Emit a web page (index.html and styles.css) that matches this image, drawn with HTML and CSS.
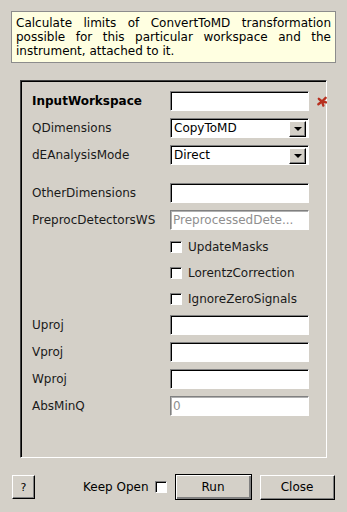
FILE: index.html
```html
<!DOCTYPE html>
<html lang="en">
<head>
  <meta charset="UTF-8">
  <title>CalculateLimitsOfConvertToMD</title>
  <meta name="viewport" content="width=device-width, initial-scale=1.0">
  <link rel="stylesheet" href="styles.css">
</head>
<body>
  <div class="dialog">
    <div class="desc">Calculate limits of ConvertToMD transformation possible for this particular workspace and the instrument, attached to it.</div>

    <div class="group">
      <div class="form">
        <label class="lbl bold">InputWorkspace</label>
        <div class="field"><input type="text" class="edit"></div>
        <span class="star">
          <svg width="11" height="11" viewBox="0 0 11 11"><g stroke="#b8301f" stroke-width="2.6" stroke-linecap="round"><line x1="5.5" y1="5.5" x2="9.5" y2="1.5"/><line x1="5.5" y1="5.5" x2="10" y2="6.5"/><line x1="5.5" y1="5.5" x2="7" y2="10"/><line x1="5.5" y1="5.5" x2="1.5" y2="8.5"/><line x1="5.5" y1="5.5" x2="2" y2="2.5"/></g></svg>
        </span>

        <label class="lbl">QDimensions</label>
        <div class="field combo"><span>CopyToMD</span><span class="arrow"></span></div>
        <span></span>

        <label class="lbl">dEAnalysisMode</label>
        <div class="field combo"><span>Direct</span><span class="arrow"></span></div>
        <span></span>

        <label class="lbl gap">OtherDimensions</label>
        <div class="field gap"><input type="text" class="edit"></div>
        <span class="gap"></span>

        <label class="lbl">PreprocDetectorsWS</label>
        <div class="field"><input type="text" class="edit disabled" value="PreprocessedDete..." disabled></div>
        <span></span>

        <span></span>
        <div class="check"><span class="box"></span>UpdateMasks</div>
        <span></span>

        <span></span>
        <div class="check"><span class="box"></span>LorentzCorrection</div>
        <span></span>

        <span></span>
        <div class="check"><span class="box"></span>IgnoreZeroSignals</div>
        <span></span>

        <label class="lbl">Uproj</label>
        <div class="field"><input type="text" class="edit"></div>
        <span></span>

        <label class="lbl">Vproj</label>
        <div class="field"><input type="text" class="edit"></div>
        <span></span>

        <label class="lbl">Wproj</label>
        <div class="field"><input type="text" class="edit"></div>
        <span></span>

        <label class="lbl">AbsMinQ</label>
        <div class="field"><input type="text" class="edit disabled" value="0" disabled></div>
        <span></span>
      </div>
    </div>

    <div class="buttons">
      <button class="btn help">?</button>
      <div class="keep">Keep Open <span class="box"></span></div>
      <button class="btn run">Run</button>
      <button class="btn close">Close</button>
    </div>
  </div>
</body>
</html>
```

FILE: styles.css
```css
* {
  box-sizing: border-box;
}

body {
  margin: 0;
  padding: 0;
  background: #d4d0c8;
  font-family: "DejaVu Sans", Verdana, sans-serif;
  font-size: 12px;
  color: #000;
}

.dialog {
  width: 347px;
  height: 512px;
  padding-top: 11px;
}

.desc {
  margin-left: 11px;
  width: 325px;
  height: 52px;
  padding: 4px 4px;
  background: #ffffe1;
  border: 1px solid #8c8c8c;
  line-height: 14px;
  text-align: justify;
}

.group {
  margin: 17px 0 0 20px;
  width: 307px;
  height: 378px;
  border-top: 1px solid #404040;
  border-left: 1px solid #404040;
  border-right: 1px solid #fff;
  border-bottom: 1px solid #fff;
  box-shadow: inset 1px 1px #000;
  padding: 10px 0 0 11px;
}

.form {
  display: grid;
  grid-template-columns: 138px 139px 18px;
  row-gap: 7px;
  align-items: center;
}

.gap {
  margin-top: 11px;
}

.lbl {
  white-space: nowrap;
  line-height: 20px;
  color: #1a1a1a;
}

.bold {
  font-weight: bold;
  color: #000;
}

.field {
  height: 20px;
}

.edit {
  width: 139px;
  height: 20px;
  margin: 0;
  padding: 0 2px;
  font-family: inherit;
  font-size: 12px;
  background: #fff;
  border-top: 1px solid #808080;
  border-left: 1px solid #808080;
  border-right: 1px solid #fff;
  border-bottom: 1px solid #fff;
  box-shadow: inset 1px 1px #000;
  outline: none;
}

.edit.disabled {
  color: #8f8f8f;
  box-shadow: inset 1px 1px #b0b0b0;
}

.combo {
  display: flex;
  align-items: center;
  justify-content: space-between;
  padding: 0 2px 0 3px;
  background: #fff;
  border-top: 1px solid #808080;
  border-left: 1px solid #808080;
  border-right: 1px solid #fff;
  border-bottom: 1px solid #fff;
  box-shadow: inset 1px 1px #000;
}

.arrow {
  position: relative;
  width: 17px;
  height: 16px;
  margin-top: 1px;
  background: #d4d0c8;
  border-top: 1px solid #fff;
  border-left: 1px solid #fff;
  border-right: 1px solid #000;
  border-bottom: 1px solid #000;
  box-shadow: inset -1px -1px #808080;
}

.arrow::after {
  content: "";
  position: absolute;
  left: 4px;
  top: 5px;
  border-left: 4px solid transparent;
  border-right: 4px solid transparent;
  border-top: 4px solid #000;
}

.star {
  display: flex;
  align-items: center;
  padding-left: 8px;
}

.check {
  display: flex;
  align-items: center;
  gap: 6px;
  height: 19px;
  color: #1a1a1a;
}

.box {
  display: inline-block;
  width: 12px;
  height: 12px;
  background: #fff;
  border-top: 1px solid #808080;
  border-left: 1px solid #808080;
  border-right: 1px solid #fff;
  border-bottom: 1px solid #fff;
  box-shadow: inset 1px 1px #000;
}

.buttons {
  display: flex;
  align-items: center;
  margin-top: 16px;
  padding-left: 12px;
  height: 26px;
}

.btn {
  font-family: inherit;
  font-size: 12px;
  color: #000;
  background: #d4d0c8;
  border-top: 1px solid #fff;
  border-left: 1px solid #fff;
  border-right: 1px solid #000;
  border-bottom: 1px solid #000;
  box-shadow: inset -1px -1px #808080;
  padding: 0;
}

.help {
  width: 23px;
  height: 24px;
  font-size: 11px;
}

.keep {
  display: flex;
  align-items: center;
  gap: 6px;
  margin-left: 48px;
}

.run {
  width: 77px;
  height: 26px;
  margin-left: 8px;
  border: 1px solid #000;
  box-shadow: inset 1px 1px #fff, inset -2px -2px #808080;
}

.close {
  width: 75px;
  height: 25px;
  margin-left: 8px;
}
```
